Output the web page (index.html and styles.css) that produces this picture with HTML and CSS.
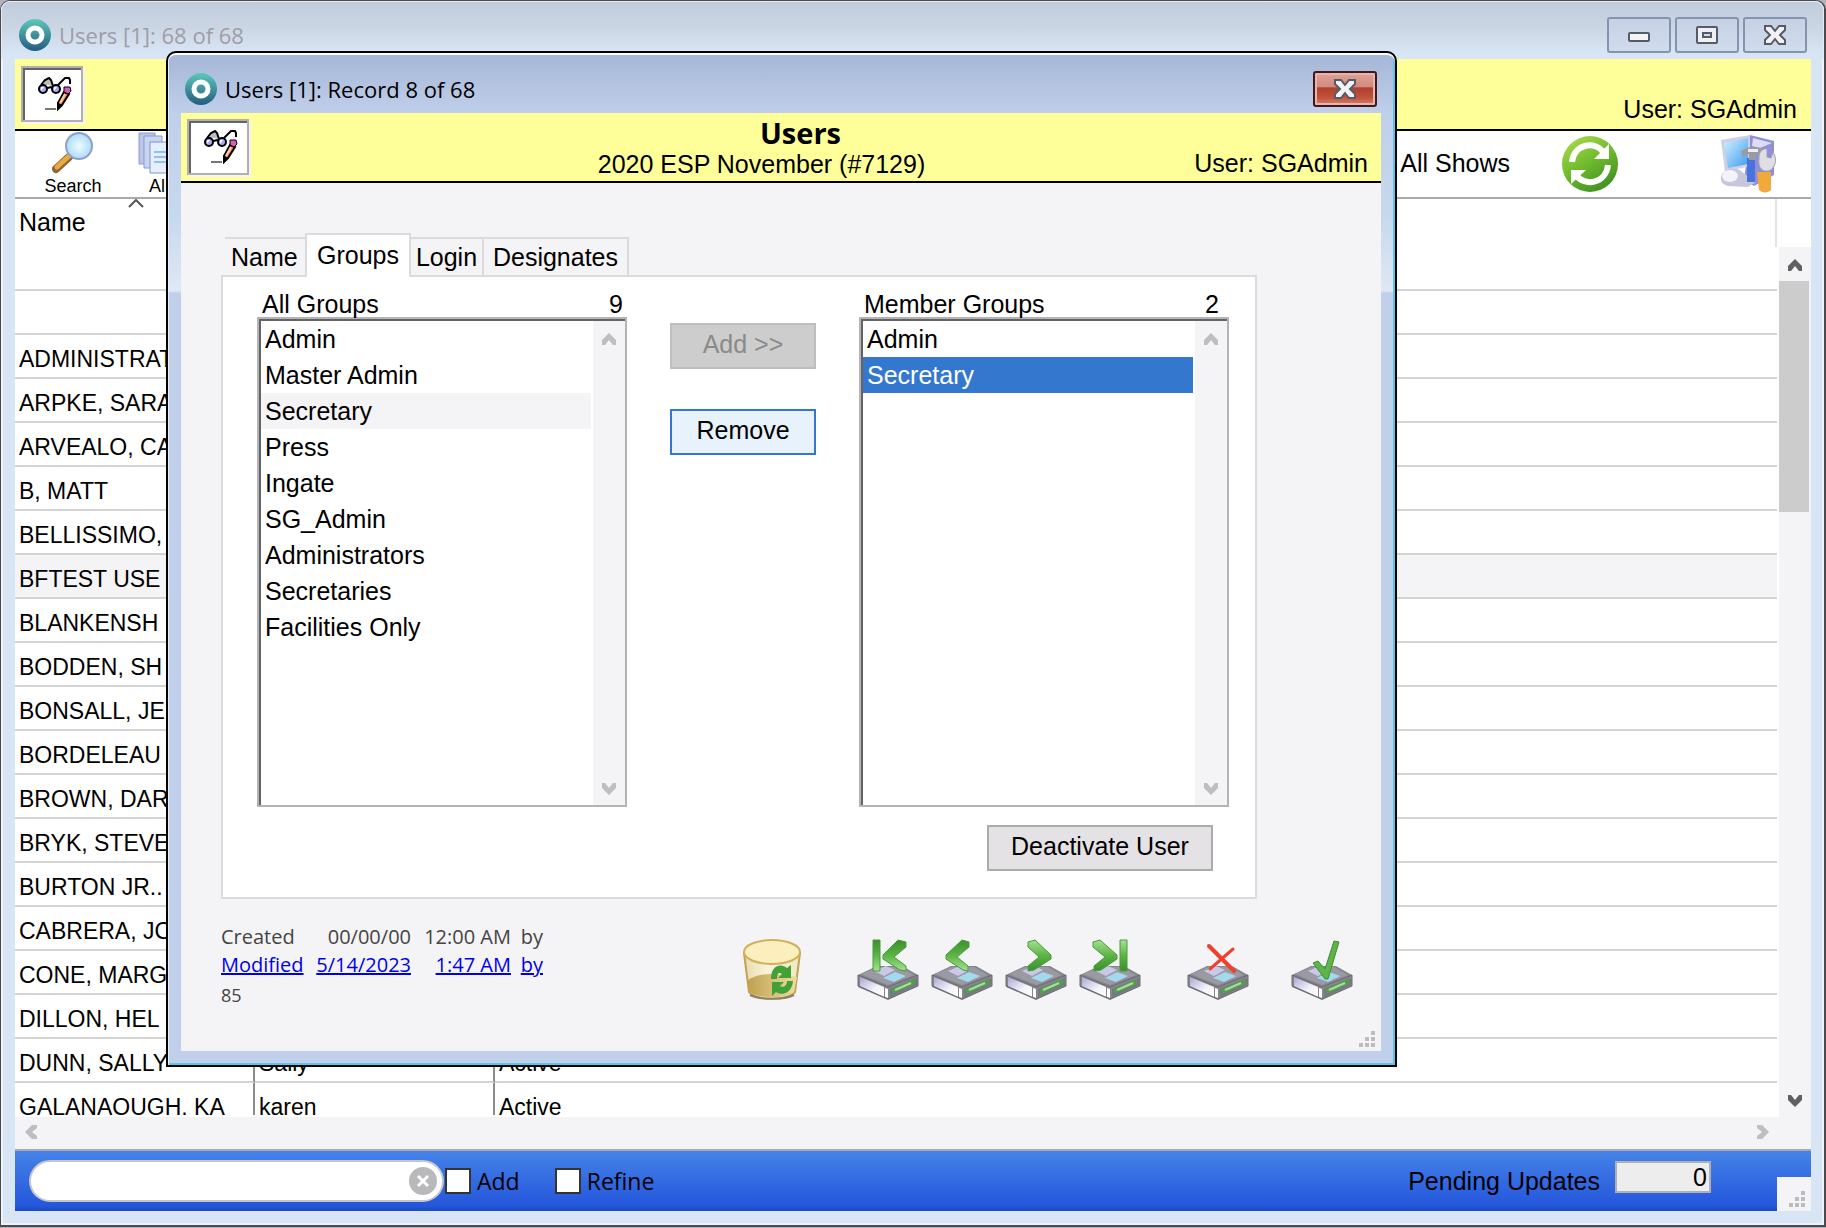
FILE: index.html
```
<!DOCTYPE html>
<html lang="en">
<head>
<meta charset="utf-8">
<title>Users</title>
<link rel="stylesheet" href="styles.css">
</head>
<body>
<svg class="defs" width="0" height="0" aria-hidden="true">
  <defs>
    <linearGradient id="ring" x1="0" y1="0" x2="0" y2="1"><stop offset="0" stop-color="#5cc8ba"/><stop offset="1" stop-color="#235c80"/></linearGradient>
    <linearGradient id="up" x1="0" y1="0" x2="0" y2="1"><stop offset="0" stop-color="#3a8f2c"/><stop offset="0.5" stop-color="#5cb545"/><stop offset="1" stop-color="#a6e094"/></linearGradient>
    <linearGradient id="down" x1="0" y1="0" x2="0" y2="1"><stop offset="0" stop-color="#a6e094"/><stop offset="0.5" stop-color="#5cb545"/><stop offset="1" stop-color="#3a8f2c"/></linearGradient>
    <linearGradient id="steel" x1="0" y1="0" x2="1" y2="1"><stop offset="0" stop-color="#a9a8d6"/><stop offset="0.6" stop-color="#f2f2fa"/><stop offset="1" stop-color="#ffffff"/></linearGradient>
    <linearGradient id="lime" x1="0.2" y1="0" x2="0.8" y2="1"><stop offset="0" stop-color="#a6d94a"/><stop offset="0.5" stop-color="#6cb82c"/><stop offset="1" stop-color="#3c8c22"/></linearGradient>
    <linearGradient id="screen" x1="0" y1="0" x2="1" y2="1"><stop offset="0" stop-color="#d4f2ff"/><stop offset="1" stop-color="#3d9cf0"/></linearGradient>
    <linearGradient id="gold" x1="0" y1="0" x2="1" y2="0"><stop offset="0" stop-color="#e3c878"/><stop offset="0.4" stop-color="#fbf2c8"/><stop offset="1" stop-color="#efdf9e"/></linearGradient>
    <linearGradient id="sand" x1="0" y1="0" x2="1" y2="0"><stop offset="0" stop-color="#bfa04c"/><stop offset="1" stop-color="#efdda0"/></linearGradient>
    <radialGradient id="glass"><stop offset="0" stop-color="#f0fbff"/><stop offset="1" stop-color="#a9dcf8"/></radialGradient>
    <symbol id="logo" viewBox="0 0 32 32">
      <circle cx="16" cy="16" r="16" fill="url(#ring)"/>
      <circle cx="16" cy="16" r="7" fill="none" stroke="#fff" stroke-width="5"/>
    </symbol>
    <symbol id="review" viewBox="0 0 34 34">
      <path d="M4 8 6 3 12 2 14 9 10 8 5 8Z" fill="#bdbdbd"/>
      <g fill="none" stroke="#000" stroke-width="2">
        <path d="M3 8 7 3l4-2 2 2 2 6M9 11l5-1M20 8l4-4 3-3h4l1 2v4"/>
        <circle cx="5" cy="12" r="4" fill="#a9a9f5"/>
        <circle cx="18" cy="12" r="4" fill="#a9a9f5"/>
      </g>
      <path d="M3 10h3l-3 4ZM16 10h3l-3 4Z" fill="#fff"/>
      <path d="M26 15 31 17 24 28 20 32 20 26Z" fill="#f08850" stroke="#000" stroke-width="2"/>
      <path d="M27 17 22 26" stroke="#ffd0a8" stroke-width="2"/>
      <path d="M19 25 24 28 19 33Z"/>
      <path d="M26 10h6l1 4-3 3-4-2Z" fill="#d65cb8" stroke="#000"/>
      <path d="M7 32h11" stroke="#777" stroke-width="2"/>
    </symbol>
    <symbol id="drive" viewBox="0 0 62 62">
      <path d="M1 36 20 27h25l16 9v11L31 61 1 48Z" fill="#85858c"/>
      <path d="M4 35 21 28h22l14 8-26 10Z" fill="#9a9aa4"/>
      <path d="M17 32 29 27l9 4-11 6Z" fill="#c9c8e8"/>
      <path d="M26 39 38 33l11 4-12 6Z" fill="#a4d8ec"/>
      <path d="M3 38l24 10v10L3 47Z" fill="url(#steel)"/>
      <path d="M28 49l3 1v9l-3-1Z" fill="#fff"/>
      <path d="M33 50 60 39v7L33 58Z" fill="#77777f"/>
      <path d="M35 50 58 40v5L35 55Z" fill="#4fa24a"/>
      <path d="M38 51 54 44" stroke="#a8dba0" stroke-width="2"/>
      <path d="M1 36 31 48 61 36M1 36v11L31 60 61 47V36" fill="none" stroke="#6c6c70"/>
    </symbol>
    <symbol id="cross" viewBox="0 0 26 22">
      <path d="M3 2h6l4 5 4-5h6v4l-5 5 5 5v4h-6l-4-5-4 5H3v-4l5-5-5-5Z" fill="#f3f3f3" stroke="#555b6b" stroke-width="2"/>
    </symbol>
    <symbol id="chev" viewBox="0 0 14 12">
      <path d="M0 12V7L5 2 7 0l2 2 5 5v5h-3L7 7l-4 5Z" fill="currentColor"/>
    </symbol>
    <symbol id="grip" viewBox="0 0 16 16">
      <path d="M12 0h4v4h-4ZM6 6h4v4H6ZM12 6h4v4h-4ZM0 12h4v4H0ZM6 12h4v4H6ZM12 12h4v4h-4Z" fill="#bcbcbe"/>
    </symbol>
  </defs>
</svg>

<main class="window">
  <header class="titlebar">
    <svg class="logo"><use href="#logo"/></svg>
    <h1 class="caption caption-idle">Users [1]: 68 of 68</h1>
    <div class="frame-buttons">
      <button class="frame-button" aria-label="Minimize"><svg width="22" height="18"><rect x="1" y="7" width="20" height="8" rx="1" fill="#f4f4f4" stroke="#555b6b" stroke-width="2"/></svg></button>
      <button class="frame-button" aria-label="Restore"><svg width="22" height="18"><rect x="1" y="1" width="20" height="16" rx="1" fill="#f0f0f0" stroke="#555b6b" stroke-width="2"/><rect x="7" y="7" width="8" height="4" fill="#d4dce8" stroke="#555b6b" stroke-width="2"/></svg></button>
      <button class="frame-button" aria-label="Close"><svg width="26" height="22"><use href="#cross"/></svg></button>
    </div>
  </header>

  <section class="client">
    <div class="banner">
      <button class="review" aria-label="Review"><svg width="34" height="34"><use href="#review"/></svg></button>
      <span class="banner-user">User: SGAdmin</span>
    </div>

    <div class="toolbar">
      <button class="tool">
        <svg width="42" height="42" viewBox="0 0 42 42">
          <path d="M4 37 17 25" stroke="#8a6a3c" stroke-width="8" stroke-linecap="round"/>
          <path d="M5 35 17 24" stroke="#eaa940" stroke-width="5" stroke-linecap="round"/>
          <circle cx="27" cy="14" r="13" fill="url(#glass)" stroke="#8fa0c8" stroke-width="2"/>
        </svg>
        Search
      </button>
      <button class="tool">
        <svg width="42" height="42" viewBox="0 0 42 42">
          <path d="M1 1h16v31H1Z" fill="#b9c6e6" stroke="#8b9cc8"/>
          <path d="M6 4h18v32H6Z" fill="#c9d5f0" stroke="#8b9cc8"/>
          <path d="M12 10h22v31H12Z" fill="#e6efff" stroke="#7d94cc"/>
          <path d="M16 20h14M16 25h14M16 30h14" stroke="#8fc1f5" stroke-width="2"/>
        </svg>
        All
      </button>
      <span class="scope">All Shows</span>
      <button class="icon-button refresh" aria-label="Refresh">
        <svg width="56" height="58" viewBox="0 0 56 58">
          <circle cx="28" cy="29" r="28" fill="url(#lime)"/>
          <path d="M10 27C12 8 34 6 41 17" fill="none" stroke="#fff" stroke-width="6"/>
          <path d="M47 9v15H32Z" fill="#fff"/>
          <path d="M46 30C44 49 22 52 14 40" fill="none" stroke="#fff" stroke-width="6"/>
          <path d="M9 49V35h15Z" fill="#fff"/>
        </svg>
      </button>
      <button class="icon-button" aria-label="Tools">
        <svg width="56" height="60" viewBox="0 0 56 60">
          <path d="M30 1 54 7v34L34 52 24 46Z" fill="#8f8fd6"/>
          <path d="M33 4 52 9 40 14 32 12Z" fill="#dcdcf4"/>
          <path d="M1 6 30 1v31L5 38Z" fill="#cfd0e6"/>
          <path d="M4 9l24-5v26L8 34Z" fill="url(#screen)"/>
          <path d="M2 40C6 34 18 33 22 38L36 48 28 53 8 52C0 50 0 44 2 40Z" fill="#c6c6dc"/>
          <ellipse cx="10" cy="42" rx="8" ry="6" fill="#f3f3fa"/>
          <path d="M27 24h8v24h-8Z" fill="#4a72dc"/>
          <path d="M21 17 30 13l13 1v6h-7v6h-7v-6l-6 3Z" fill="#9a9aa2"/>
          <path d="M28 15h10v3H28Z" fill="#eeeef2"/>
          <path d="M39 25C38 17 44 14 47 15v8l4 1 2-6c5 8 2 16-4 19l-5 0c-4-2-6-6-5-12Z" fill="#dedee4" stroke="#a0a0b0"/>
          <path d="M37 38h14v18q-6 5-12 0Z" fill="#f0a93a"/>
        </svg>
      </button>
    </div>

    <div class="grid-area">
      <div class="table-clip">
        <table class="users">
          <thead>
            <tr><th class="col-name" scope="col">Name<svg class="sort" viewBox="0 0 16 9"><path d="M1 8 8 1l7 7" fill="none" stroke="#555" stroke-width="2"/></svg></th><th class="col-login"></th><th class="col-rest"></th></tr>
          </thead>
          <tbody>
            <tr><td></td><td></td><td></td></tr>
            <tr><td>ADMINISTRATO</td><td></td><td></td></tr>
            <tr><td>ARPKE, SARA</td><td></td><td></td></tr>
            <tr><td>ARVEALO, CA</td><td></td><td></td></tr>
            <tr><td>B, MATT</td><td></td><td></td></tr>
            <tr><td>BELLISSIMO,</td><td></td><td></td></tr>
            <tr class="current"><td>BFTEST USE</td><td></td><td></td></tr>
            <tr><td>BLANKENSH</td><td></td><td></td></tr>
            <tr><td>BODDEN, SH</td><td></td><td></td></tr>
            <tr><td>BONSALL, JE</td><td></td><td></td></tr>
            <tr><td>BORDELEAU</td><td></td><td></td></tr>
            <tr><td>BROWN, DAR</td><td></td><td></td></tr>
            <tr><td>BRYK, STEVE</td><td></td><td></td></tr>
            <tr><td>BURTON JR..</td><td></td><td></td></tr>
            <tr><td>CABRERA, JO</td><td></td><td></td></tr>
            <tr><td>CONE, MARG</td><td></td><td></td></tr>
            <tr><td>DILLON, HEL</td><td></td><td></td></tr>
            <tr><td>DUNN, SALLY</td><td>Sally</td><td>Active</td></tr>
            <tr><td>GALANAOUGH, KA</td><td>karen</td><td>Active</td></tr>
          </tbody>
        </table>
      </div>
      <div class="vscroll main-vscroll">
        <svg class="chev"><use href="#chev"/></svg>
        <div class="thumb"></div>
        <svg class="chev flip"><use href="#chev"/></svg>
      </div>
    </div>

    <div class="hscroll">
      <svg class="chev left"><use href="#chev"/></svg>
      <svg class="chev right"><use href="#chev"/></svg>
    </div>

    <footer class="statusbar">
      <div class="search">
        <input class="search-input" type="text" aria-label="Search">
        <button class="clear" aria-label="Clear"><svg width="28" height="28"><circle cx="14" cy="14" r="14" fill="#b9b9bb"/><path d="M9 9l10 10M19 9 9 19" stroke="#fff" stroke-width="3"/></svg></button>
      </div>
      <label class="check"><input class="box" type="checkbox">Add</label>
      <label class="check"><input class="box" type="checkbox">Refine</label>
      <label class="pending">Pending Updates<input class="count" type="text" value="0" readonly></label>
      <div class="corner"><svg width="16" height="16"><use href="#grip"/></svg></div>
    </footer>
  </section>
</main>

<div class="dialog" role="dialog" aria-labelledby="dialog-title">
  <header class="dialog-titlebar">
    <svg class="logo"><use href="#logo"/></svg>
    <h2 class="caption" id="dialog-title">Users [1]: Record 8 of 68</h2>
    <button class="close" aria-label="Close"><svg width="26" height="22"><use href="#cross"/></svg></button>
  </header>
  <div class="dialog-body">
    <div class="banner dialog-banner">
      <button class="review" aria-label="Review"><svg width="34" height="34"><use href="#review"/></svg></button>
      <div class="heading">
        <h3 class="heading-title">Users</h3>
        <p class="heading-sub">2020 ESP November (#7129)</p>
      </div>
      <span class="banner-user">User: SGAdmin</span>
    </div>

    <div class="tabs" role="tablist">
      <button class="tab tab-name" role="tab">Name</button>
      <button class="tab tab-groups" role="tab" aria-selected="true">Groups</button>
      <button class="tab tab-login" role="tab">Login</button>
      <button class="tab tab-designates" role="tab">Designates</button>
    </div>

    <section class="panel" role="tabpanel">
      <div class="pickers">
        <div class="picker">
          <div class="picker-head"><span id="all-groups">All Groups</span><span>9</span></div>
          <div class="listbox">
            <ul class="options" role="listbox" aria-labelledby="all-groups">
              <li class="option" role="option">Admin</li>
              <li class="option" role="option">Master Admin</li>
              <li class="option hovered" role="option">Secretary</li>
              <li class="option" role="option">Press</li>
              <li class="option" role="option">Ingate</li>
              <li class="option" role="option">SG_Admin</li>
              <li class="option" role="option">Administrators</li>
              <li class="option" role="option">Secretaries</li>
              <li class="option" role="option">Facilities Only</li>
            </ul>
            <div class="vscroll muted"><svg class="chev"><use href="#chev"/></svg><svg class="chev flip"><use href="#chev"/></svg></div>
          </div>
        </div>
        <div class="moves">
          <button class="push" disabled>Add &gt;&gt;</button>
          <button class="push active">Remove</button>
        </div>
        <div class="picker">
          <div class="picker-head picker-head-inset"><span id="member-groups">Member Groups</span><span>2</span></div>
          <div class="listbox">
            <ul class="options" role="listbox" aria-labelledby="member-groups">
              <li class="option" role="option">Admin</li>
              <li class="option selected" role="option" aria-selected="true">Secretary</li>
            </ul>
            <div class="vscroll muted"><svg class="chev"><use href="#chev"/></svg><svg class="chev flip"><use href="#chev"/></svg></div>
          </div>
        </div>
      </div>
      <button class="push deactivate">Deactivate User</button>
    </section>

    <div class="record">
      <table class="audit">
        <tr><td class="audit-what">Created</td><td class="audit-date">00/00/00</td><td class="audit-time">12:00 AM</td><td class="audit-by">by</td></tr>
        <tr><td class="audit-what"><a href="#">Modified</a></td><td class="audit-date"><a href="#">5/14/2023</a></td><td class="audit-time"><a href="#">1:47 AM</a></td><td class="audit-by"><a href="#">by</a></td></tr>
        <tr><td class="audit-id" colspan="4">85</td></tr>
      </table>
      <div class="actions">
        <button class="icon-button trash" aria-label="Delete">
          <svg width="60" height="62" viewBox="0 0 60 62">
            <path d="M1 14 6 53C14 62 44 62 52 53L57 14Z" fill="url(#gold)" fill-opacity="0.6" stroke="#c3a254" stroke-width="2"/>
            <path d="M4 42C14 33 32 34 54 38L51 53C43 60 15 60 7 53Z" fill="url(#sand)"/>
            <ellipse cx="29" cy="13" rx="28" ry="12" fill="#fbf0bd" stroke="#d2b05c" stroke-width="2"/>
            <path d="M7 56C17 61 41 61 51 56" fill="none" stroke="#8d8468" stroke-width="2"/>
            <path d="M28 40C28 26 38 24 44 29L48 26V39H35L39 35C36 33 34 34 34 40Z" fill="#42a136"/>
            <path d="M50 42C49 55 38 57 33 53L29 57V43H41L37 47C40 49 44 47 44 42Z" fill="#42a136"/>
          </svg>
        </button>
        <div class="nav">
          <button class="icon-button" aria-label="First"><svg width="62" height="62"><use href="#drive"/><path d="M16 1h7v31h-7Z" fill="url(#up)" stroke="#4a9b3a"/><path d="M41 1 49 3V8L37 18 49 27V32L43 31 26 20V16Z" fill="url(#up)" stroke="#4a9b3a" stroke-linejoin="round"/></svg></button>
          <button class="icon-button" aria-label="Previous"><svg width="62" height="62"><use href="#drive"/><path d="M31 1 38 3V8L26 18 37 27V32L32 31 15 20V16Z" fill="url(#up)" stroke="#4a9b3a" stroke-linejoin="round"/></svg></button>
          <button class="icon-button" aria-label="Next"><svg width="62" height="62"><use href="#drive"/><path d="M30 1 23 3V8L34 18 23 27V32L29 31 46 20V16Z" fill="url(#down)" stroke="#4a9b3a" stroke-linejoin="round"/></svg></button>
          <button class="icon-button" aria-label="Last"><svg width="62" height="62"><use href="#drive"/><path d="M21 1 14 3V8L26 18 15 27V32L22 31 38 20V16Z" fill="url(#down)" stroke="#4a9b3a" stroke-linejoin="round"/><path d="M41 1h7v31h-7Z" fill="url(#down)" stroke="#4a9b3a"/></svg></button>
        </div>
        <button class="icon-button" aria-label="Cancel"><svg width="62" height="62"><use href="#drive"/><path d="M22 7 47 32" stroke="#f04030" stroke-width="4" stroke-linecap="round"/><path d="M46 10 23 30" stroke="#f04030" stroke-width="3" stroke-linecap="round"/></svg></button>
        <button class="icon-button save" aria-label="Save"><svg width="62" height="62"><use href="#drive"/><path d="M22 24 27 22 34 30 43 2 48 3 37 40H34Z" fill="#5db448" stroke="#3d8f32"/></svg></button>
      </div>
    </div>
    <div class="dialog-foot"><svg width="16" height="16"><use href="#grip"/></svg></div>
  </div>
</div>
</body>
</html>
```
FILE: styles.css
```
:root {
  --arial: "Liberation Sans", Arial, sans-serif;
  --ui: "Open Sans", "Segoe UI", sans-serif;
  --grey: #f4f3f6;
  --line: #dcdadd;
}
* { box-sizing: border-box; }
body {
  margin: 0;
  height: 100vh;
  position: relative;
  overflow: hidden;
  background: #b4b4b6;
  font: 25px/36px var(--arial);
  color: #000;
}
button, input { font: inherit; color: inherit; margin: 0; border-radius: 0; }
button { padding: 0; border: 0; background: none; }
svg { display: block; flex: none; }
h1, h2, h3, p, ul { margin: 0; padding: 0; font-weight: 400; }
.defs { position: absolute; }

/* main window frame */
.window {
  height: calc(100vh - 1px);
  display: flex;
  flex-direction: column;
  border: solid #4b4b4f;
  border-width: 1px 2px 2px 1px;
  border-radius: 10px 10px 0 0;
  background: #d8e5f4;
  box-shadow: inset 0 0 0 2px #eef2fa;
  padding: 0 13px 14px 14px;
}
.titlebar {
  height: 58px;
  flex: none;
  display: flex;
  align-items: center;
  gap: 8px;
  margin: 0 -13px 0 -14px;
  padding: 8px 16px 0 17px;
  border: solid #e6ecf6;
  border-width: 1px 1px 0;
  border-radius: 9px 9px 0 0;
  background: linear-gradient(#c0ccdc, #cbd6e4 45%, #d8e5f4 90%);
}
.logo { width: 32px; height: 32px; }
.caption { font: 22px/32px var(--ui); }
.caption-idle { color: #a09da4; }
.frame-buttons { margin-left: auto; display: flex; gap: 4px; }
.frame-button {
  width: 64px;
  height: 36px;
  display: grid;
  place-items: center;
  border: 2px solid #8593b0;
  border-radius: 3px;
  background: linear-gradient(#c6d2e4, #d0dcec);
}
.client { flex: 1; min-height: 0; display: flex; flex-direction: column; background: #fff; }

/* yellow banner */
.banner {
  height: 72px;
  flex: none;
  display: flex;
  justify-content: space-between;
  align-items: center;
  padding: 0 14px 0 6px;
  border-bottom: 2px solid #000;
  background: #ffff99;
}
.review {
  width: 62px;
  height: 56px;
  padding-left: 5px;
  display: grid;
  place-items: center;
  background: #fff;
  border: 2px solid #b0b0b0;
  box-shadow: inset 2px 2px #646464, 2px 2px #f4f3f6;
}
.banner-user { align-self: flex-end; margin-bottom: 2px; }

/* toolbar */
.toolbar {
  height: 68px;
  flex: none;
  display: flex;
  align-items: center;
  padding: 0 35px 0 18px;
  border-bottom: 2px solid #a9a9b0;
}
.tool {
  width: 80px;
  height: 64px;
  display: flex;
  flex-direction: column;
  align-items: center;
  margin-right: 6px;
  font-size: 18px;
  line-height: 24px;
}
.scope { margin-left: auto; margin-bottom: 2px; }
.refresh { margin: 0 102px 0 52px; }

/* user grid */
.grid-area { flex: 1; min-height: 0; display: flex; }
.table-clip { flex: 1; min-width: 0; overflow: hidden; margin-right: 2px; margin-bottom: 2px; }
.users { width: 100%; table-layout: fixed; border-collapse: separate; border-spacing: 0; }
.users th { height: 92px; text-align: left; vertical-align: top; font-weight: 400; padding: 5px 4px 0 4px; border-bottom: 2px solid #d3d3d3; position: relative; }
.users td { height: 44px; padding: 6px 4px 0; border-bottom: 2px solid #d3d3d3; font-size: 23px; line-height: 36px; vertical-align: top; white-space: nowrap; }
.users td:not(:last-child) { border-right: 2px solid #8b8b8b; }
.col-name, .col-login { width: 240px; }
.users .col-rest { background: linear-gradient(#e4e4e6, #e4e4e6) right top / 2px 48px no-repeat; }
.current td { background: var(--grey); }
.sort { position: absolute; left: 113px; top: 0; width: 16px; height: 9px; }

/* scroll bars */
.vscroll { width: 32px; flex: none; display: flex; flex-direction: column; align-items: center; padding: 12px 0 10px; background: var(--grey); color: #606064; }
.main-vscroll { margin-top: 48px; }
.thumb { width: 30px; height: 231px; margin: 10px 2px 0 0; background: #cdcccd; }
.chev { width: 14px; height: 12px; }
.flip { transform: rotate(180deg); margin-top: auto; }
.left { transform: rotate(-90deg); }
.right { transform: rotate(90deg); }
.muted { color: #bebebe; }
.hscroll { height: 34px; flex: none; display: flex; justify-content: space-between; align-items: center; padding: 0 41px 2px 9px; border-bottom: 2px solid #a9a9b0; background: var(--grey); color: #bebebe; }

/* status bar */
.statusbar {
  height: 60px;
  flex: none;
  display: flex;
  align-items: center;
  padding-left: 14px;
  background: linear-gradient(#4583e8, #2456dc 92%, #1d49bd);
  font: 23px/32px var(--ui);
}
.search {
  width: 415px;
  height: 42px;
  display: flex;
  align-items: center;
  padding: 0 5px 0 20px;
  border: 2px solid #c4c6cc;
  border-radius: 21px;
  background: #fff;
}
.search-input { flex: 1; min-width: 0; border: 0; outline: 0; background: none; }
.check { display: flex; align-items: center; gap: 6px; margin: 0 34px 0 1px; }
.box { appearance: none; width: 26px; height: 26px; border: 2px solid #333; background: #fff; }
.pending { margin-left: auto; display: flex; align-items: center; gap: 15px; font: 25px/32px var(--arial); }
.count { width: 96px; height: 32px; margin-bottom: 8px; padding: 0 2px; text-align: right; border: 2px solid #b0b0b4; background: #ededee; }
.corner { width: 34px; height: 34px; margin-left: 66px; align-self: flex-end; display: flex; justify-content: flex-end; align-items: flex-end; padding: 0 6px 4px 0; background: var(--grey); }

/* record dialog */
.dialog {
  position: absolute;
  left: 166px;
  right: 429px;
  top: 51px;
  padding: 0 14px 14px 13px;
  border: 2px solid #000;
  border-radius: 10px 10px 0 0;
  background: linear-gradient(#a4b6d6, #c0cfea 60px, #c6d8ee 160px, #dfe8f4 238px, #c0cfea 240px);
  box-shadow: inset 0 2px #fff, inset 1px 0 #e8effa, inset -2px -2px #62c4e4;
}
.dialog-titlebar { height: 60px; display: flex; align-items: center; gap: 8px; padding: 12px 4px 0 4px; }
.close {
  width: 64px;
  height: 36px;
  margin-left: auto;
  display: grid;
  place-items: center;
  border: 2px solid #401820;
  border-radius: 3px;
  background: linear-gradient(#e0a298, #d18a7e 44%, #b0402c 46%, #c05038 75%, #d48070);
  box-shadow: inset 0 0 0 2px #e9b4aa;
}
.dialog-body { background: var(--grey); }
.dialog-banner { height: 70px; padding-right: 13px; }
.dialog-banner .banner-user { width: 242px; text-align: right; margin-bottom: 0; }
.heading { text-align: center; margin-left: 148px; }
.heading-title { font: bold 29px/34px var(--ui); padding-left: 78px; }
.heading-sub { line-height: 28px; }

/* tabs and panel */
.tabs { display: flex; align-items: flex-end; height: 94px; padding-left: 44px; margin-bottom: -2px; position: relative; }
.tab { height: 40px; border: 2px solid var(--line); border-left: 0; line-height: 34px; }
.tab-name { width: 80px; border-right: 0; padding-left: 6px; text-align: left; }
.tab-groups { width: 106px; height: 44px; border: 2px solid var(--line); border-bottom: 0; background: #fff; line-height: 38px; padding-bottom: 2px; }
.tab-login { width: 73px; }
.tab-designates { width: 145px; }
.panel { margin: 0 124px 0 40px; height: 624px; padding: 12px 26px 26px 34px; border: 2px solid var(--line); background: #fff; }
.pickers { display: flex; justify-content: space-between; }
.picker { width: 370px; }
.picker-head { display: flex; justify-content: space-between; padding: 2px 4px 0 5px; line-height: 26px; }
.picker-head-inset { padding-right: 10px; }
.listbox { height: 490px; display: flex; border: 2px solid #b4b4b6; box-shadow: inset 2px 2px #646464; padding: 2px 0 0 2px; }
.options { flex: 1; margin-right: 2px; list-style: none; }
.option { height: 36px; padding-left: 4px; }
.hovered { background: var(--grey); }
.selected { background: #3477ce; color: #fff; }
.moves { display: flex; flex-direction: column; gap: 40px; padding-top: 34px; }
.push { width: 146px; height: 46px; padding-bottom: 4px; border: 2px solid #acacac; background: #e4e2e5; }
.push:disabled { border-color: #bebebe; background: #cdcdcd; color: #8a8a8a; }
.push.active { border-color: #3477ce; background: #e8f2fd; }
.deactivate { display: block; width: 226px; margin: 18px 16px 0 auto; }

/* audit line and record actions */
.record { display: flex; justify-content: space-between; align-items: flex-start; padding: 24px 28px 0 40px; }
.audit { border-collapse: collapse; font: 20px/28px var(--ui); color: #444; }
.audit td { padding: 0; text-align: right; }
.audit .audit-what, .audit .audit-id { width: 86px; text-align: left; }
.audit .audit-date { width: 104px; }
.audit .audit-time { width: 100px; }
.audit .audit-by { width: 32px; }
.audit .audit-id { padding-top: 2px; font-size: 18px; }
.audit a { color: #0000f0; }
.actions { display: flex; align-items: center; padding-top: 16px; }
.trash { margin-right: 54px; }
.nav { display: flex; gap: 12px; margin-right: 46px; }
.save { margin-left: 42px; }
.dialog-foot { height: 42px; display: flex; justify-content: flex-end; align-items: flex-end; padding: 0 6px 4px 0; }
```
